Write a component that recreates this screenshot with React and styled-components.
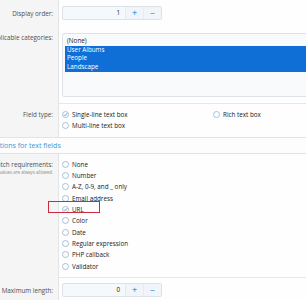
import React from 'react';
import styled, { createGlobalStyle } from 'styled-components';

const GlobalStyle = createGlobalStyle`
  html, body {
    margin: 0;
    padding: 0;
    background: #ffffff;
    overflow: hidden;
  }
  body {
    font-family: "Open Sans", "Noto Sans", sans-serif;
    color: #1d1d1d;
  }
`;

const Page = styled.div`
  width: 440px;
  margin-left: -70px;
`;

const Row = styled.div`
  display: grid;
  grid-template-columns: 128px 1fr;
`;

const Label = styled.div`
  background: #f5f5f5;
  text-align: right;
  padding: ${(p) => p.$top || 0}px 5px 0 0;
  font-size: 6.3px;
  color: #505050;
  line-height: 9px;
`;

const Hint = styled.div`
  font-size: 4.4px;
  color: #8a8a8a;
  line-height: 6px;
`;

const Cell = styled.div`
  background: #fefefe;
  border-left: 1px solid #e4e4e4;
  padding: ${(p) => p.$top}px 4px ${(p) => p.$bottom}px 3px;
  border-top: ${(p) => (p.$line ? '1px solid #e7e7e7' : 'none')};
`;

const NumberBox = styled.div`
  display: flex;
  width: 100px;
  height: 14px;
  box-sizing: border-box;
  border: 1px solid #dde2e8;
  border-radius: 2px;
  background: #f6f9fc;
  font-size: 6.3px;
`;

const NumberValue = styled.div`
  flex: 1;
  text-align: right;
  padding-right: 5px;
  line-height: 12px;
  color: #222;
`;

const StepButton = styled.div`
  width: 17px;
  border-left: 1px solid #e6ebf0;
  background: #f1f5f9;
  color: #47a7eb;
  font-size: 8px;
  font-weight: 700;
  line-height: 12px;
  text-align: center;
`;

const Select = styled.div`
  height: 64px;
  box-sizing: border-box;
  margin-top: 3px;
  border: 1px solid #dde2e8;
  border-radius: 2px;
  background: #f8fafc;
  padding: 3px 2px;
  font-size: 6.3px;
`;

const Option = styled.div`
  height: 8.67px;
  line-height: 8.67px;
  padding-left: 2px;
  background: ${(p) => (p.$selected ? '#0f6fd6' : 'transparent')};
  color: ${(p) => (p.$selected ? '#ffffff' : '#222')};
`;

const RadioGrid = styled.div`
  display: grid;
  grid-template-columns: 151px 151px;
`;

const RadioItem = styled.div`
  position: relative;
  display: flex;
  align-items: center;
  gap: 3px;
  height: 11.33px;
  font-size: 6.3px;
  color: #222;
`;

const Mark = styled.div`
  position: absolute;
  left: -14px;
  top: -3px;
  width: 52px;
  height: 12px;
  box-sizing: border-box;
  border: 1px solid #c92b3d;
`;

const Heading = styled.div`
  border-top: 1px solid #e3e3e3;
  border-bottom: 1px solid #e3e3e3;
  background: #fdfdfd;
  height: 15px;
  line-height: 15px;
  padding-left: 60px;
  font-size: 7px;
  color: #3f96d6;
`;

function RadioIcon({ checked }) {
  return (
    <svg width="7" height="7" viewBox="0 0 14 14">
      <circle cx="7" cy="7" r="6" fill="#ffffff" stroke="#8fb2cf" strokeWidth="1.6" />
      {checked && (
        <polyline points="4,7.2 6.2,9.4 10.2,4.8" fill="none" stroke="#3f8fd0" strokeWidth="1.8" />
      )}
    </svg>
  );
}

function Radio({ label, checked, marked }) {
  return (
    <RadioItem>
      {marked && <Mark />}
      <RadioIcon checked={checked} />
      <span>{label}</span>
    </RadioItem>
  );
}

const matchOptions = [
  'None',
  'Number',
  'A-Z, 0-9, and _ only',
  'Email address',
  'URL',
  'Color',
  'Date',
  'Regular expression',
  'PHP callback',
  'Validator',
];

export default function App() {
  return (
    <Page>
      <GlobalStyle />
      <Row>
        <Label $top={9}>Display order:</Label>
        <Cell $top={6} $bottom={5}>
          <NumberBox>
            <NumberValue>1</NumberValue>
            <StepButton>+</StepButton>
            <StepButton>−</StepButton>
          </NumberBox>
        </Cell>
      </Row>
      <Row>
        <Label $top={8}>Applicable categories:</Label>
        <Cell $top={5} $bottom={6}>
          <Select>
            <Option>(None)</Option>
            <Option $selected>User Albums</Option>
            <Option $selected>People</Option>
            <Option $selected>Landscape</Option>
          </Select>
        </Cell>
      </Row>
      <Row>
        <Label $top={7}>Field type:</Label>
        <Cell $line $top={5} $bottom={5}>
          <RadioGrid>
            <Radio label="Single-line text box" checked />
            <Radio label="Rich text box" />
            <Radio label="Multi-line text box" />
          </RadioGrid>
        </Cell>
      </Row>
      <Heading>Options for text fields</Heading>
      <Row>
        <Label $top={6}>
          Match requirements:
          <Hint>Empty values are always allowed.</Hint>
        </Label>
        <Cell $top={5} $bottom={5}>
          {matchOptions.map((o) => (
            <Radio key={o} label={o} checked={o === 'URL'} marked={o === 'URL'} />
          ))}
        </Cell>
      </Row>
      <Row>
        <Label $top={9}>Maximum length:</Label>
        <Cell $line $top={5} $bottom={5}>
          <NumberBox>
            <NumberValue>0</NumberValue>
            <StepButton>+</StepButton>
            <StepButton>−</StepButton>
          </NumberBox>
        </Cell>
      </Row>
    </Page>
  );
}
